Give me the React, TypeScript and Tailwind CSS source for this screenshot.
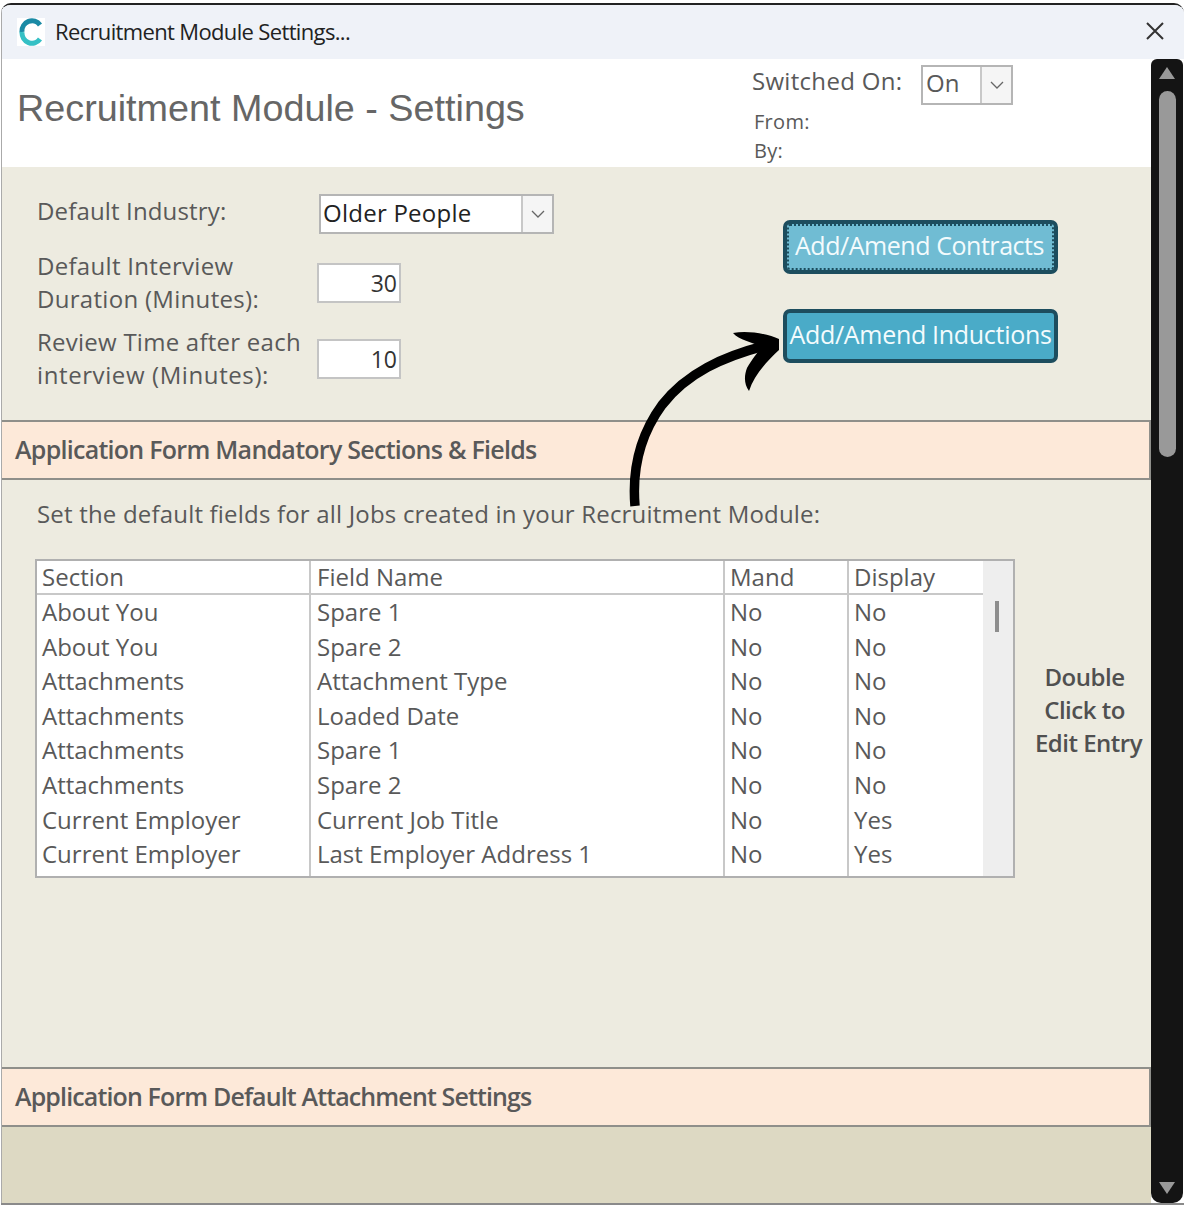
const rows = [
  ['About You', 'Spare 1', 'No', 'No'],
  ['About You', 'Spare 2', 'No', 'No'],
  ['Attachments', 'Attachment Type', 'No', 'No'],
  ['Attachments', 'Loaded Date', 'No', 'No'],
  ['Attachments', 'Spare 1', 'No', 'No'],
  ['Attachments', 'Spare 2', 'No', 'No'],
  ['Current Employer', 'Current Job Title', 'No', 'Yes'],
  ['Current Employer', 'Last Employer Address 1', 'No', 'Yes'],
]

function Chevron() {
  return (
    <svg width="16" height="10" viewBox="0 0 16 10" fill="none" stroke="#666" strokeWidth="1.3">
      <path d="M2 2l6 6 6-6" />
    </svg>
  )
}

function Band({ title, className }: { title: string; className: string }) {
  return (
    <div className={`h-[60px] shrink-0 flex items-center pl-[13px] pb-[1px] bg-[#fde9d9] border-y-2 border-r-2 border-[#8f8f8a] text-[25px] font-semibold text-[#595959] ${className}`}>
      {title}
    </div>
  )
}

function NumberBox({ value }: { value: string }) {
  return (
    <div className="w-[84px] h-[40px] bg-white border-2 border-[#c4c4c4] flex items-center justify-end pr-[2px] text-[23px] text-[#333]">
      {value}
    </div>
  )
}

export default function App() {
  return (
    <div className="w-[1187px] h-[1206px] bg-white pt-[3px] font-['Open_Sans',sans-serif] overflow-hidden">
      <div className="w-[1183px] h-[1202px] ml-[1px] flex flex-col border-t-2 border-[#222] border-b-2 border-b-[#8a8a8a] rounded-t-[10px] overflow-hidden relative">
        {/* title bar */}
        <div className="h-[54px] shrink-0 bg-[#eff2f8] flex items-center pl-[15px] pr-[19px] border-l border-[#aaa]">
          <div className="w-[28px] h-[28px] bg-white">
            <svg width="28" height="28" viewBox="0 0 28 28" fill="none" strokeWidth="5">
              <path d="M23 7A10 10.5 0 0 0 5 14" stroke="#1a8aa5" />
              <path d="M5 14A10 10.5 0 0 0 23 21" stroke="#35c0c5" />
            </svg>
          </div>
          <div className="ml-[10px] -mt-[2px] text-[22px] tracking-[-0.65px] text-[#222]">Recruitment Module Settings...</div>
          <svg className="ml-auto -mt-[2px]" width="20" height="20" viewBox="0 0 20 20" stroke="#333" strokeWidth="2">
            <path d="M2 2l16 16M18 2L2 18" />
          </svg>
        </div>

        <div className="flex-1 flex min-h-0">
          <div className="w-[1150px] flex flex-col border-l border-[#aaa]">
            {/* header */}
            <div className="h-[108px] shrink-0 bg-white flex justify-between">
              <div className="pl-[15px] pt-[24px] font-['Liberation_Sans',sans-serif] text-[37.75px] leading-[50px] text-[#666]">
                Recruitment Module - Settings
              </div>
              <div className="w-[399px] pt-[6px]">
                <div className="flex items-center h-[40px]">
                  <div className="w-[169px] text-[24px] tracking-[0.3px] text-[#595959] -mt-[8px]">Switched On:</div>
                  <div className="w-[92px] h-[40px] border-2 border-[#b5b5b5] flex items-center pl-[3px] text-[24px] text-[#595959]">
                    <span className="flex-1 -mt-[4px]">On</span>
                    <div className="w-[31px] h-[36px] bg-[#f5f5f5] border-l-2 border-[#c8c8c8] flex items-center justify-center"><Chevron /></div>
                  </div>
                </div>
                <div className="ml-[2px] mt-[2px] text-[20px] leading-[29px] tracking-[0.3px] text-[#595959]">
                  <div>From:</div>
                  <div>By:</div>
                </div>
              </div>
            </div>

            {/* settings */}
            <div className="h-[253px] shrink-0 bg-[#edebe0] flex text-[24px] text-[#595959]">
              <div className="w-[781px] pl-[35px]">
                <div className="flex mt-[27px] h-[40px]">
                  <div className="w-[282px] leading-[34px] tracking-[0.15px]">Default Industry:</div>
                  <div className="w-[235px] h-[40px] border-2 border-[#b5b5b5] bg-white flex items-center pl-[2px] text-[#222]">
                    <span className="flex-1 -mt-[2px] tracking-[0.25px]">Older People</span>
                    <div className="w-[31px] h-[36px] bg-[#f5f5f5] border-l-2 border-[#c8c8c8] flex items-center justify-center"><Chevron /></div>
                  </div>
                </div>
                <div className="flex mt-[16px] h-[66px] items-center">
                  <div className="w-[280px] pb-[2px] leading-[33px] tracking-[0.3px]">Default Interview<br />Duration (Minutes):</div>
                  <NumberBox value="30" />
                </div>
                <div className="flex mt-[10px] h-[66px] items-center">
                  <div className="w-[280px] pb-[2px] leading-[33px]">
                    <span className="tracking-[0.25px]">Review Time after each</span><br />
                    <span className="tracking-[0.6px]">interview (Minutes):</span>
                  </div>
                  <NumberBox value="10" />
                </div>
              </div>
              <div className="pt-[53px] flex flex-col gap-[35px]">
                <div className="w-[275px] h-[54px] rounded-[7px] border-4 border-[#1d4d5e] bg-[#70bcd3] outline-2 outline-dotted outline-[#1d4d5e] outline-offset-[-6px] flex items-center justify-center pr-[2px] pb-[2px] text-[25px] tracking-[-0.45px] text-[#f3fbfd]">
                  Add/Amend Contracts
                </div>
                <div className="w-[275px] h-[54px] rounded-[7px] border-4 border-[#1d4d5e] bg-[#4aabc8] flex items-center justify-center pb-[2px] text-[25px] tracking-[-0.3px] text-[#f3fbfd] whitespace-nowrap">
                  Add/Amend Inductions
                </div>
              </div>
            </div>

            <Band title="Application Form Mandatory Sections & Fields" className="tracking-[-0.73px]" />

            {/* fields table */}
            <div className="h-[587px] shrink-0 bg-[#edebe0] text-[#595959]">
              <div className="pl-[35px] pt-[16px] text-[24px] leading-[36px] tracking-[0.19px]">
                Set the default fields for all Jobs created in your Recruitment Module:
              </div>
              <div className="flex mt-[27px]">
                <div className="ml-[33px] w-[980px] h-[319px] bg-white border-2 border-[#b0b0b0] flex text-[24px] leading-[34.6px]">
                  <div className="w-[946px] flex flex-col">
                    <div className="grid grid-cols-[272px_414px_124px_135px] h-[34px] shrink-0 border-b-2 border-[#c8c8c8] leading-[32px]">
                      <div className="pl-[5px]">Section</div>
                      <div className="pl-[6px] border-l-2 border-[#c8c8c8]">Field Name</div>
                      <div className="pl-[5px] border-l-2 border-[#c8c8c8]">Mand</div>
                      <div className="pl-[5px] border-l-2 border-[#c8c8c8]">Display</div>
                    </div>
                    {rows.map((row, i) => (
                      <div key={i} className="grid grid-cols-[272px_414px_124px_135px] h-[34.6px] last:h-auto last:flex-1">
                        <div className="pl-[5px]">{row[0]}</div>
                        <div className="pl-[6px] border-l-2 border-[#c8c8c8]">{row[1]}</div>
                        <div className="pl-[5px] border-l-2 border-[#c8c8c8]">{row[2]}</div>
                        <div className="pl-[5px] border-l-2 border-[#c8c8c8]">{row[3]}</div>
                      </div>
                    ))}
                  </div>
                  <div className="w-[30px] bg-[#eeeeee] pt-[40px] pl-[12px]">
                    <div className="w-[4px] h-[31px] bg-[#8d8d8d]" />
                  </div>
                </div>
                <div className="flex-1 pt-[101px] pl-[11px] text-center text-[24px] font-semibold leading-[33px] tracking-[-0.5px] text-[#505050]">
                  <div className="pr-[8px]">Double</div>
                  <div className="pr-[8px]">Click to</div>
                  <div className="whitespace-nowrap">Edit Entry</div>
                </div>
              </div>
            </div>

            <Band title="Application Form Default Attachment Settings" className="tracking-[-0.87px]" />
            <div className="flex-1 bg-[#ddd9c3]" />
          </div>

          {/* scrollbar */}
          <div className="w-[32px] bg-[#141414] rounded-t-[6px] rounded-b-[10px] flex flex-col items-center pt-[8px] pb-[9px]">
            <div className="w-0 h-0 border-x-[8px] border-x-transparent border-b-[12px] border-b-[#999]" />
            <div className="w-[17px] h-[366px] mt-[12px] rounded-full bg-[#999]" />
            <div className="mt-auto w-0 h-0 border-x-[8px] border-x-transparent border-t-[12px] border-t-[#999]" />
          </div>
        </div>

        {/* arrow drawn over the page */}
        <svg className="absolute left-[-1px] top-[-5px] pointer-events-none" width="1187" height="1206" viewBox="0 0 1187 1206" fill="none">
          <path d="M635 506C632 470 640 435 662 405C686 374 722 356 772 344" stroke="#000" strokeWidth="9.5" />
          <path d="M733 333C748 330 768 334 779 339L779 350C766 362 754 376 749 391C744 384 744 376 747 368C752 359 758 352 762 347C752 342 739 340 733 333Z" fill="#000" />
        </svg>
      </div>
    </div>
  )
}
